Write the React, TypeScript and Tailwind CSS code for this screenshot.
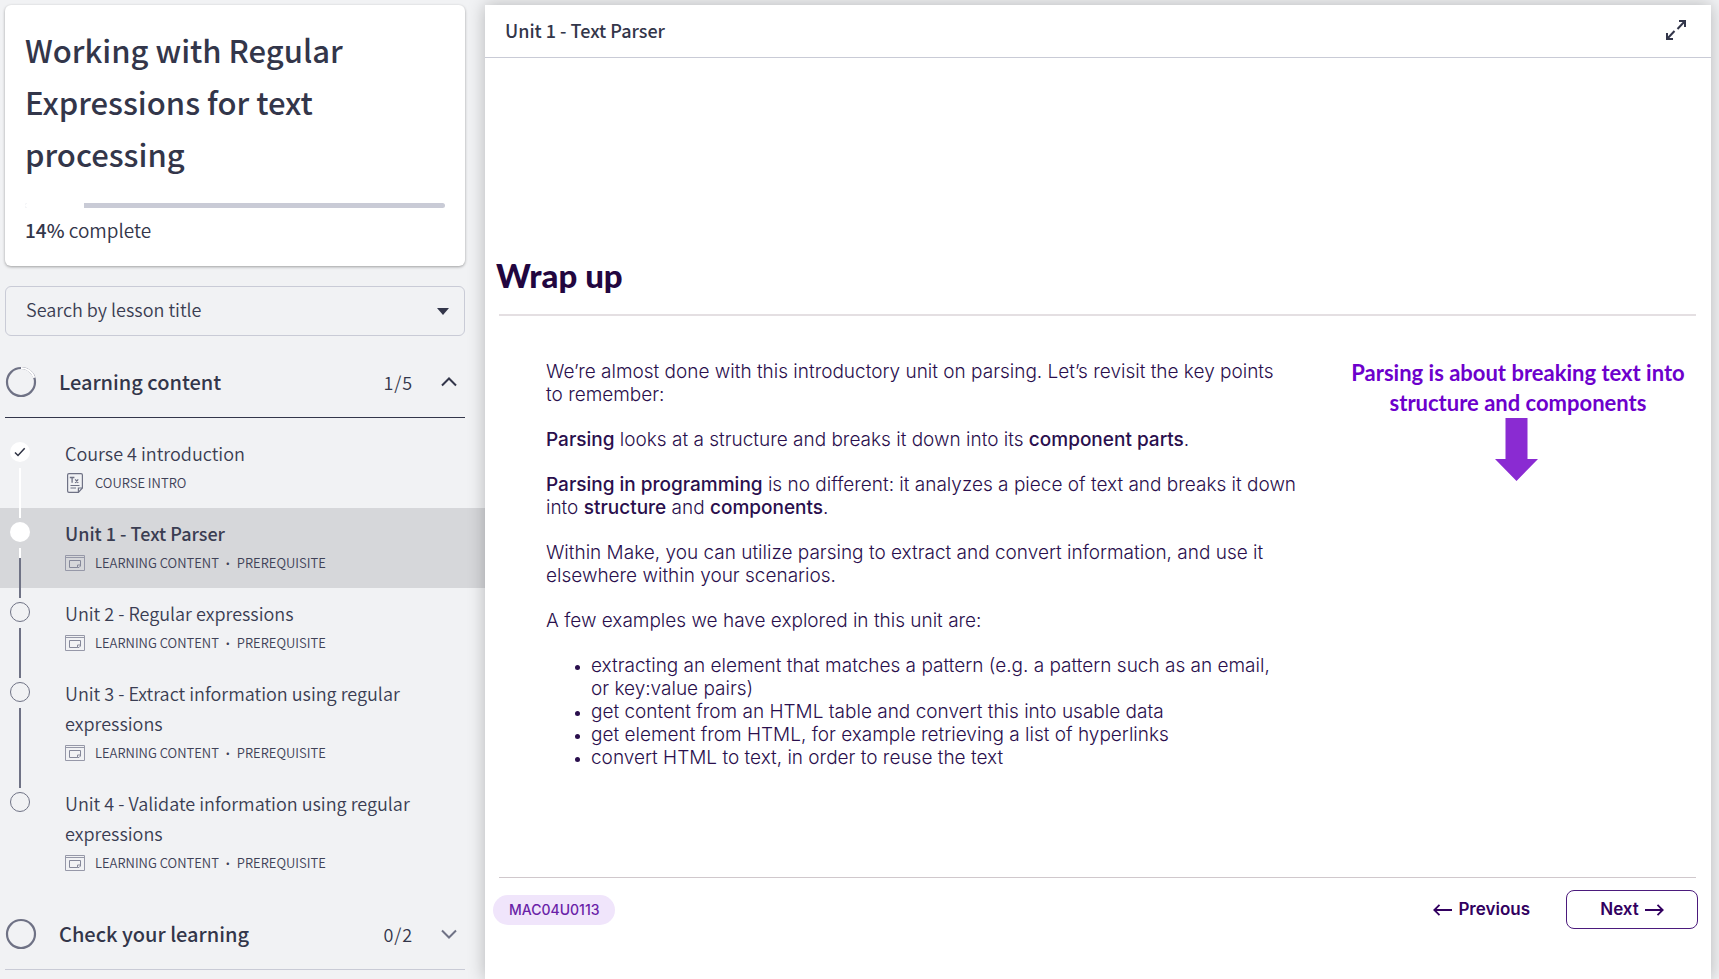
type Status = "done" | "current" | "todo";

interface Lesson {
  title: string;
  meta: string[];
  kind: "text" | "content";
  status: Status;
}

const lessons: Lesson[] = [
  { title: "Course 4 introduction", meta: ["COURSE INTRO"], kind: "text", status: "done" },
  { title: "Unit 1 - Text Parser", meta: ["LEARNING CONTENT", "PREREQUISITE"], kind: "content", status: "current" },
  { title: "Unit 2 - Regular expressions", meta: ["LEARNING CONTENT", "PREREQUISITE"], kind: "content", status: "todo" },
  {
    title: "Unit 3 - Extract information using regular expressions",
    meta: ["LEARNING CONTENT", "PREREQUISITE"],
    kind: "content",
    status: "todo",
  },
  {
    title: "Unit 4 - Validate information using regular expressions",
    meta: ["LEARNING CONTENT", "PREREQUISITE"],
    kind: "content",
    status: "todo",
  },
];

function TextIcon() {
  return (
    <svg width="20" height="20" viewBox="0 0 20 20" fill="none" stroke="#6f7285" aria-hidden="true">
      <path d="M4 .6h12a1.4 1.4 0 0 1 1.4 1.4v13l-4 4.4H4A1.4 1.4 0 0 1 2.600 18V2A1.400 1.400 0 0 1 4 .6Z" strokeWidth="1.2" />
      <path d="M17.400 15h-4v4.400M5.500 12.500h9M5.500 15h5.500" strokeWidth="1.200" />
      <path d="M4.800 4.500h4.600M7.100 4.500v5.300M10.200 6.300l3 3.500M13.200 6.300l-3 3.500" strokeWidth="1.300" />
    </svg>
  );
}

function ContentIcon() {
  return (
    <svg width="20" height="16" viewBox="0 0 20 16" fill="none" stroke="#9698a8" aria-hidden="true">
      <path d="M.5.5h19v15H.5zM.5 2.500h19" />
      <path d="M15.500 10V5.500h-11v7h8" stroke="#85889a" />
      <path d="M15.500 10h-3v2.500h1.500l1.500-1.500z" stroke="#85889a" />
    </svg>
  );
}

function Marker({ status }: { status: Status }) {
  if (status === "done") {
    return (
      <span className="flex size-5 shrink-0 items-center justify-center rounded-full bg-white">
        <svg width="12" height="10" viewBox="0 0 12 10" fill="none" stroke="#2d3142" strokeWidth="1.500" aria-hidden="true">
          <path d="M1 5.500l3 3L10.700 1.300" />
        </svg>
      </span>
    );
  }
  if (status === "current") return <span className="size-5 shrink-0 rounded-full bg-white" />;
  return <span className="size-5 shrink-0 rounded-full border border-[#6f7285]" />;
}

function LessonRow({ lesson, last }: { lesson: Lesson; last: boolean }) {
  const current = lesson.status === "current";
  return (
    <li className={current ? "bg-[#d6d7da]" : ""}>
      <a href="#" aria-current={current ? "page" : undefined} className="flex">
        <span className="relative flex w-10 shrink-0 flex-col items-center gap-1.5 pt-3.5">
          <Marker status={lesson.status} />
          {!last && (
            <span
              className={
                "z-10 -mb-2.5 flex w-0.5 flex-1 flex-col " + (lesson.status === "done" ? "bg-white" : "bg-[#6f7285]")
              }
            >
              {current && <span className="h-2.5 bg-white" />}
            </span>
          )}
        </span>
        <span className="flex-1 py-2.5 pr-10 pl-[25px]">
          <span
            className={
              "block text-[18px] leading-[30px] text-[#3a3d52] " + (current ? "font-medium" : "font-[350]")
            }
          >
            {lesson.title}
          </span>
          <span className="flex h-[30px] items-center gap-2.5 text-[13px] font-[350] text-[#3f4257]">
            {lesson.kind === "text" ? <TextIcon /> : <ContentIcon />}
            <span>
              {lesson.meta.map((m, i) => (
                <span key={m}>
                  {i > 0 && <span className="mx-1 font-['Lato',sans-serif] font-bold"> · </span>}
                  {m}
                </span>
              ))}
            </span>
          </span>
        </span>
      </a>
    </li>
  );
}

function Chevron({ up }: { up: boolean }) {
  return (
    <svg width="16" height="10" viewBox="0 0 16 10" fill="none" stroke={up ? "#33364a" : "#6f7285"} strokeWidth="2" aria-hidden="true">
      <path d={up ? "M1 8.500l7-7 7 7" : "M1 1.500l7 7 7-7"} />
    </svg>
  );
}

function SectionHeader({ title, count, open, progress }: { title: string; count: string; open: boolean; progress: number }) {
  return (
    <button
      type="button"
      aria-expanded={open}
      className={
        "flex h-[71px] w-full items-center border-b text-left text-[#33364a] " +
        (open ? "border-[#33364a]" : "border-[#c9cbd6]")
      }
    >
      <svg width="32" height="32" viewBox="0 0 32 32" fill="none" strokeWidth="2.200" aria-hidden="true">
        <circle cx="16" cy="16" r="14" stroke="#6f7285" />
        {progress > 0 && (
          <circle
            cx="16"
            cy="16"
            r="14"
            stroke="#fff"
            pathLength="100"
            strokeDasharray={progress + " 100"}
            transform="rotate(-90 16 16)"
          />
        )}
      </svg>
      <span className="ml-[22px] flex-1 text-[20px] leading-[30px] font-medium">{title}</span>
      <span className="text-[18px] leading-[30px] font-[350] tracking-wider">{count}</span>
      <span className="mr-2 ml-7">
        <Chevron up={open} />
      </span>
    </button>
  );
}

function Sidebar() {
  return (
    <aside className="w-[485px] shrink-0 pt-[5px] text-[#33364a]">
      <div className="mr-5 ml-[5px]">
        <section className="rounded-md bg-white px-5 pt-[19px] pb-[21px] shadow-[0_1px_3px_rgba(0,0,0,0.35)]">
          <h1 className="text-[31px] leading-[52px] font-medium">
            Working with Regular Expressions for text processing
          </h1>
          <div
            role="progressbar"
            aria-valuenow={14}
            aria-label="Course progress"
            className="mt-[23px] flex h-[5px] overflow-hidden rounded-full bg-[#c9cbd6]"
          >
            <div className="w-[14%] bg-white" />
          </div>
          <p className="mt-[7px] text-[19px] leading-[30px] font-[350]">
            <strong className="font-medium">14%</strong> complete
          </p>
        </section>
        <div className="relative mt-5">
          <label htmlFor="lesson" className="sr-only">
            Search by lesson title
          </label>
          <select
            id="lesson"
            defaultValue=""
            className="h-[50px] w-full appearance-none rounded-md border border-[#c9cbd6] bg-transparent px-5 pb-1 text-[18px] leading-[30px] font-[350] text-[#3a3d52]"
          >
            <option value="">Search by lesson title</option>
            {lessons.map((l) => (
              <option key={l.title}>{l.title}</option>
            ))}
          </select>
          <svg
            className="pointer-events-none absolute top-[22px] right-4"
            width="12"
            height="7"
            viewBox="0 0 12 7"
            fill="#33364a"
            aria-hidden="true"
          >
            <path d="M0 0h12L6 7z" />
          </svg>
        </div>
        <div className="mt-[11px]">
          <SectionHeader title="Learning content" count="1/5" open progress={20} />
        </div>
      </div>
      <ol className="mt-2.5">
        {lessons.map((l, i) => (
          <LessonRow key={l.title} lesson={l} last={i === lessons.length - 1} />
        ))}
      </ol>
      <div className="mt-[11px] mr-5 ml-[5px]">
        <SectionHeader title="Check your learning" count="0/2" open={false} progress={0} />
      </div>
    </aside>
  );
}

function Bold({ children }: { children: string }) {
  return <strong className="font-medium">{children}</strong>;
}

function Arrow({ left = false }: { left?: boolean }) {
  return (
    <svg width="19" height="12" viewBox="0 0 19 12" fill="none" stroke="currentColor" strokeWidth="1.800" aria-hidden="true">
      <path d={left ? "M19 6H1.500M6.500.8L1.300 6l5.200 5.200" : "M0 6h17.500M12.500.8L17.700 6l-5.200 5.200"} />
    </svg>
  );
}

function Slide() {
  return (
    <article className="pr-[15px] pl-3.5 pt-[197px] font-['Inter',sans-serif] text-[#2a0f4d]">
      <h2 className="-ml-[3px] font-['Lato',sans-serif] text-[33px] leading-10 font-black text-[#22063f]">Wrap up</h2>
      <hr className="mt-[19px] border-0 border-t-2 border-[#e4dfe2]" />
      <div className="flex justify-between pt-11">
        <div className="ml-[47px] flex w-[760px] flex-col gap-[22px] text-[19px] leading-[23px] font-light">
          <p>
            We’re almost done with this introductory unit on parsing. Let’s revisit the key points to{"\u00a0"}remember:
          </p>
          <p>
            <Bold>Parsing</Bold> looks at a structure and breaks it down into its <Bold>component parts</Bold>.
          </p>
          <p>
            <Bold>Parsing in programming</Bold> is no different: it analyzes a piece of text and breaks it down into{" "}
            <Bold>structure</Bold> and <Bold>components</Bold>.
          </p>
          <p>
            Within Make, you can utilize parsing to extract and convert information, and use it elsewhere within your
            scenarios.
          </p>
          <p>A few examples we have explored in this unit are:</p>
          <ul className="list-disc pl-[45px] marker:text-[14px]">
            <li>
              extracting an element that matches a pattern (e.g. a pattern such as an email, or{"\u00a0"}key:value
              pairs)
            </li>
            <li>get content from an HTML table and convert this into usable data</li>
            <li>get element from HTML, for example retrieving a list of hyperlinks</li>
            <li>convert HTML to text, in order to reuse the text</li>
          </ul>
        </div>
        <div className="-mt-0.5 flex w-[356px] flex-col items-center">
          <p className="text-center font-['Lato',sans-serif] text-[22px] leading-[30px] font-bold text-[#6d00cc]">
            Parsing is about breaking text into structure and components
          </p>
          <svg className="mr-1" width="43" height="63" viewBox="0 0 43 63" fill="#8a2bd2" aria-hidden="true">
            <path d="M10.500 0h22v41H43L21.500 63 0 41h10.500z" />
          </svg>
        </div>
      </div>
      <hr className="mt-[108px] border-0 border-t border-[#d0c8cc]" />
      <div className="-mr-0.5 mt-3 flex items-center justify-between">
        <span className="-ml-1.5 rounded-full bg-[#f0e5fb] px-4 text-[14px] leading-[30px] font-medium text-[#6a1fa8]">
          MAC04U0113
        </span>
        <div className="flex items-center gap-9 text-[17px] font-semibold text-[#320060]">
          <button type="button" className="flex items-center gap-1.5">
            <Arrow left /> Previous
          </button>
          <button
            type="button"
            className="flex h-[39px] w-[132px] items-center justify-center gap-1.5 rounded-lg border border-[#4b1a7c]"
          >
            Next <Arrow />
          </button>
        </div>
      </div>
    </article>
  );
}

export default function App() {
  return (
    <div className="flex h-screen overflow-hidden bg-[#f1f2f4] font-['Noto_Sans_CJK_SC',sans-serif]">
      <Sidebar />
      <main className="relative z-20 mt-[5px] mr-2 min-w-0 flex-1 bg-white shadow-[0_0_16px_rgba(0,0,0,0.25)]">
        <header className="flex h-[53px] items-center justify-between border-b border-[#c9cbd6] pr-6 pb-0.5 pl-5 text-[#33364a]">
          <h2 className="text-[18px] leading-[30px] font-medium">Unit 1 - Text Parser</h2>
          <button type="button" aria-label="Full screen">
            <svg width="22" height="22" viewBox="0 0 22 22" fill="none" stroke="#33364a" strokeWidth="2" aria-hidden="true">
              <path d="M14 2h6v6M20 2l-7.500 8M8 20H2v-6M2 20l7.500-8" />
            </svg>
          </button>
        </header>
        <Slide />
      </main>
    </div>
  );
}
